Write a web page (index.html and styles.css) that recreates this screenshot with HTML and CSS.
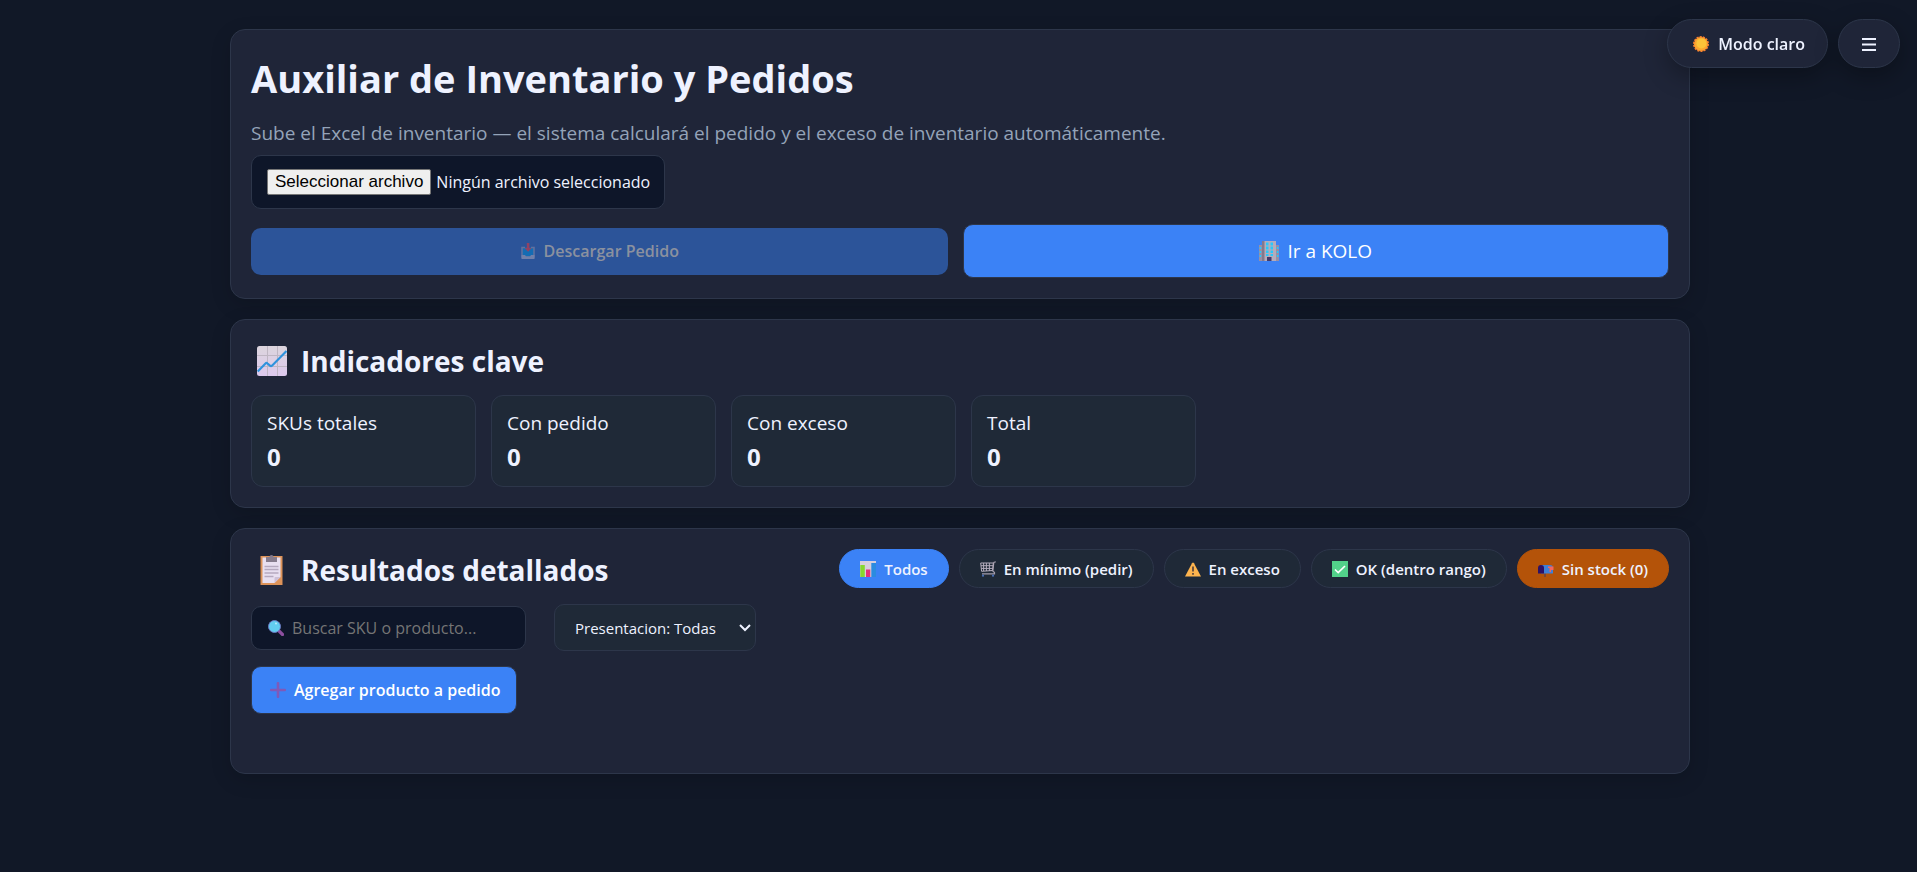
FILE: index.html
```
<!DOCTYPE html>
<html lang="es">
<head>
    <meta charset="UTF-8">
    <meta name="viewport" content="width=device-width, initial-scale=1.0">
    <title>Auxiliar de Inventario y Pedidos</title>
    <link rel="stylesheet" href="styles.css">
</head>
<body>
    <div class="top-actions">
        <button type="button" class="float-btn">
            <svg class="icon" viewBox="0 0 16 16"><circle cx="8" cy="8" r="7" fill="#f9902f"/><circle cx="8" cy="8" r="7" fill="none" stroke="#f9802f" stroke-width="2" stroke-dasharray="2.100 1.040"/><circle cx="8" cy="8" r="6.600" fill="#f9a72f"/><circle cx="8.400" cy="7.400" r="5" fill="#fbc338"/></svg>
            <span>Modo claro</span>
        </button>
        <button type="button" class="float-btn menu-btn" aria-label="Menú">
            <svg class="menu-icon" viewBox="0 0 14 14"><path d="M0 2h14M0 7.500h14M0 13h14" stroke="#eef2ff" stroke-width="2"/></svg>
        </button>
    </div>

    <main class="container">
        <section class="card">
            <h1>Auxiliar de Inventario y Pedidos</h1>
            <p class="muted">Sube el Excel de inventario — el sistema calculará el pedido y el exceso de inventario automáticamente.</p>
            <label class="file-box" for="fileInput">
                <input type="file" id="fileInput" accept=".xlsx,.xls">
                <span class="file-btn">Seleccionar archivo</span>
                <span>Ningún archivo seleccionado</span>
            </label>
            <div class="main-actions">
                <button type="button" class="btn" id="downloadBtn" disabled>
                    <svg class="icon" viewBox="0 0 16 16"><path d="M5 4.500H2V14h12V4.500h-3" fill="#0084ce" stroke="#998ea4" stroke-width="1.500"/><path d="M1.500 12h3.500l1 1.500h4l1-1.500h3.500V16h-13z" fill="#b4acbc"/><path d="M6.800 0h2.600v5h2.200L8.100 8.800 4.600 5h2.200z" fill="#f8312f"/></svg>
                    <span>Descargar Pedido</span>
                </button>
                <a class="btn link-btn" href="#kolo">
                    <svg class="icon-lg" viewBox="0 0 20 20"><path d="M0 4h5v16H0zM15 4h5v16h-5z" fill="#998ea4"/><path d="M3 0h14v20H3z" fill="#b4acbc"/><path d="M3 0h2.500v20H3z" fill="#83798d"/><path d="M7 1.500h2.500v3H7zM11.500 1.500H14v3h-2.500zM7 5.500h2.500v3H7zM11.500 5.500H14v3h-2.500zM7 9.500h2.500v2.500H7zM11.500 9.500H14V12h-2.500zM7 13h2.500v2H7zM11.500 13H14v2h-2.500zM.6 6h1.600v2H.6zM.6 10h1.600v2H.6zM.6 14h1.600v2H.6zM17.800 6h1.600v2h-1.600zM17.800 10h1.600v2h-1.600zM17.800 14h1.600v2h-1.600z" fill="#26c9fc"/><path d="M8 16h4.500v4H8z" fill="#433b6b"/></svg>
                    <span>Ir a KOLO</span>
                </a>
            </div>
        </section>

        <section class="card">
            <h2>
                <svg class="title-icon" viewBox="0 0 30 30"><defs><linearGradient id="paper" x2="0" y2="1"><stop offset="0" stop-color="#dcd5dd"/><stop offset="1" stop-color="#ddc9ee"/></linearGradient></defs><rect width="30" height="30" rx="2.500" fill="url(#paper)"/><path d="M10.500 0v30M20.500 0v30M0 9.500h30M0 20.500h30" stroke="#bfb6c3"/><path d="M.7 25.500L8.500 17.500q1-1 2 0l2.500 2.200q1 .8 2 0L29.500 5" fill="none" stroke="#2f93dd" stroke-width="2.200"/></svg>
                <span>Indicadores clave</span>
            </h2>
            <div class="kpis">
                <div class="kpi"><div>SKUs totales</div><strong>0</strong></div>
                <div class="kpi"><div>Con pedido</div><strong>0</strong></div>
                <div class="kpi"><div>Con exceso</div><strong>0</strong></div>
                <div class="kpi"><div>Total</div><strong>0</strong></div>
            </div>
        </section>

        <section class="card results">
            <div class="results-head">
                <h2>
                    <svg class="title-icon" viewBox="0 0 30 30"><path d="M3.500 1h22v29h-22z" fill="#dd9359"/><path d="M5.500 2.500h18V22L17.500 28h-12z" fill="#e8dff0"/><path d="M23.500 22h-5q-1 0-1 1v5z" fill="#cdbfd6"/><path d="M9 2h3.500a2 2 0 0 1 4 0H20v5H9z" fill="#857b8c"/><path d="M7.500 11.500h14M7.500 14.500h14M7.500 18h14M7.500 21.500h9" stroke="#b5a9bf" stroke-width="1.300"/></svg>
                    <span>Resultados detallados</span>
                </h2>
                <div class="filters">
                    <button type="button" class="chip active">
                        <svg class="icon" viewBox="0 0 16 16"><path d="M0 0h16v16H0z" fill="#d8cfdd"/><path d="M.3 4h4.500v12H.3z" fill="#86d72f"/><path d="M6 8.500h4.300V16H6z" fill="#e3307c"/><path d="M11.300 2H16v14h-4.700z" fill="#2b8be0"/></svg>
                        <span>Todos</span>
                    </button>
                    <button type="button" class="chip">
                        <svg class="icon" viewBox="0 0 16 16"><path d="M15.800.7l-2 .8-1 8.500 1.700 1.500v1.300H2" fill="none" stroke="#a49cac" stroke-width="1.200"/><path d="M.7 2h12.600l-.7 7.500-11 .8zM1 4.700h12M1.200 7.400h11.600M3.600 2v8M6.400 2v8M9.400 2v8" fill="none" stroke="#b4acbc"/><circle cx="3" cy="14.700" r="1.100" fill="#4a6fb8"/><circle cx="13" cy="14.700" r="1.100" fill="#4a6fb8"/></svg>
                        <span>En mínimo (pedir)</span>
                    </button>
                    <button type="button" class="chip">
                        <svg class="icon" viewBox="0 0 16 16"><path d="M8 1.500Q8.500 1.500 9 2.300L16 15.500H0L7 2.300Q7.500 1.500 8 1.500z" fill="#fdb44e"/><path d="M8 5.500v5M8 12v1.800" stroke="#4b3b3b" stroke-width="1.600"/></svg>
                        <span>En exceso</span>
                    </button>
                    <button type="button" class="chip">
                        <svg class="icon" viewBox="0 0 16 16"><path d="M0 0h16v16H0z" fill="#52d18a"/><path d="M3 8.500l3.200 3L13 5" fill="none" stroke="#fff" stroke-width="1.700"/></svg>
                        <span>OK (dentro rango)</span>
                    </button>
                    <button type="button" class="chip warn">
                        <svg class="icon" viewBox="0 0 16 16"><path d="M6 12h2v4H6z" fill="#7d4533"/><path d="M3 4h9q3 0 3 3v5.500H3z" fill="#3f7fd6"/><path d="M0 12.500V7a3 3 0 0 1 6 0v5.500z" fill="#2d1166"/><path d="M10 5.500h5.500v3.500H13v2h-1.500V7H10z" fill="#f3655c"/></svg>
                        <span>Sin stock (0)</span>
                    </button>
                </div>
            </div>
            <div class="search-row">
                <div class="search">
                    <svg class="icon" viewBox="0 0 16 16"><path d="M10.500 10.500l4 4" stroke="#8d4f9f" stroke-width="3.200" stroke-linecap="round"/><circle cx="6.500" cy="6.500" r="6" fill="#62cdf0" stroke="#6b7ac4"/><circle cx="8" cy="3.500" r="1" fill="#b9ecfb"/></svg>
                    <input type="text" placeholder="Buscar SKU o producto..." aria-label="Buscar SKU o producto">
                </div>
                <div class="select-wrap">
                    <select aria-label="Presentacion">
                        <option>Presentacion: Todas</option>
                    </select>
                    <svg class="chevron" viewBox="0 0 12 8"><path d="M1 1l5 5 5-5" fill="none" stroke="#eef2ff" stroke-width="2"/></svg>
                </div>
            </div>
            <button type="button" class="btn add-btn">
                <svg class="icon" viewBox="0 0 16 16"><path d="M8 1.200v13.600M1.200 8h13.600" stroke="#7f59b8" stroke-width="2.600" stroke-linecap="round"/></svg>
                <span>Agregar producto a pedido</span>
            </button>
        </section>
    </main>
</body>
</html>
```

FILE: styles.css
```
:root {
    --bg: #111827;
    --card: #1f2538;
    --panel: #1f2937;
    --input: #0e1629;
    --border: #2d364a;
    --primary: #3b82f6;
    --text: #eef2ff;
    --muted: #94a3b8;
}
* {
    box-sizing: border-box;
}
body {
    margin: 0;
    padding: 29px 20px 20px 23px;
    min-height: 100vh;
    background: var(--bg);
    color: var(--text);
    font-family: 'Segoe UI', 'Open Sans', sans-serif;
    font-size: 19px;
    line-height: 26px;
}
button,
input,
select {
    font-family: inherit;
    color: inherit;
}
svg {
    flex: none;
}
.icon {
    width: 16px;
    height: 16px;
}
.icon-lg {
    width: 20px;
    height: 20px;
}

/* floating buttons */
.top-actions {
    position: fixed;
    top: 19px;
    right: 17px;
    display: flex;
    gap: 10px;
    z-index: 10;
}
.float-btn {
    display: flex;
    align-items: center;
    justify-content: center;
    gap: 9px;
    height: 49px;
    padding: 0 22px 0 25px;
    border: 1px solid var(--border);
    border-radius: 25px;
    background: var(--card);
    font-size: 16px;
    font-weight: 600;
    box-shadow: 0 8px 24px rgba(0, 0, 0, 0.3);
}
.menu-btn {
    width: 62px;
    padding: 0;
}
.menu-icon {
    width: 14px;
    height: 14px;
}

.container {
    max-width: 1460px;
    margin: 0 auto;
}
.card {
    margin-bottom: 20px;
    padding: 20px;
    border: 1px solid var(--border);
    border-radius: 15px;
    background: var(--card);
    box-shadow: 0 6px 20px rgba(0, 0, 0, 0.15);
}
h1 {
    margin: 0 0 14px;
    font-size: 38px;
    line-height: 56px;
}
h2 {
    display: flex;
    align-items: center;
    gap: 14px;
    margin: 0;
    padding-left: 6px;
    font-size: 28px;
    line-height: 42px;
}
.title-icon {
    width: 30px;
    height: 30px;
}
.muted {
    margin: 0 0 9px;
    color: var(--muted);
}

.file-box {
    display: inline-flex;
    align-items: center;
    gap: 5px;
    height: 54px;
    padding: 0 14px 0 15px;
    border: 1px solid var(--border);
    border-radius: 10px;
    background: var(--input);
    font-size: 16px;
    cursor: pointer;
}
.file-box input {
    position: absolute;
    width: 1px;
    height: 1px;
    opacity: 0;
}
.file-btn {
    padding: 0 7px;
    border: 1px solid #767676;
    border-radius: 2px;
    background: #efefef;
    color: #000;
    font-family: 'Liberation Sans', Arial, sans-serif;
    font-size: 17px;
    line-height: 24px;
}
.main-actions {
    display: flex;
    align-items: center;
    gap: 15px;
    margin-top: 15px;
}
.btn {
    display: flex;
    align-items: center;
    justify-content: center;
    gap: 8px;
    height: 47px;
    padding: 0 18px;
    border: 0;
    border-radius: 10px;
    background: var(--primary);
    color: #fff;
    font-size: 16px;
    font-weight: 600;
    text-decoration: none;
}
.main-actions .btn {
    flex: 1;
}
.btn:disabled {
    background: #2c5499;
    color: #8b919f;
}
.btn:disabled .icon {
    opacity: 0.5;
}
.main-actions .link-btn {
    height: 54px;
    padding: 0 22px;
    border: 1px solid var(--border);
    font-size: 19px;
    font-weight: 400;
}

.kpis {
    display: grid;
    grid-template-columns: repeat(auto-fill, 225px);
    gap: 15px;
    margin-top: 13px;
}
.kpi {
    padding: 14px 15px 12px;
    border: 1px solid var(--border);
    border-radius: 12px;
    background: var(--panel);
}
.kpi strong {
    display: block;
    margin-top: 4px;
    font-size: 24px;
    line-height: 34px;
}

.results {
    padding-bottom: 59px;
}
.results-head {
    display: flex;
    align-items: flex-start;
    justify-content: space-between;
    flex-wrap: wrap;
    gap: 10px;
}
.filters {
    display: flex;
    flex-wrap: wrap;
    gap: 10px;
}
.chip {
    display: flex;
    align-items: center;
    gap: 8px;
    height: 39px;
    padding: 0 20px;
    border: 1px solid var(--border);
    border-radius: 20px;
    background: var(--panel);
    font-size: 15px;
    font-weight: 600;
}
.chip.active {
    border-color: var(--primary);
    background: var(--primary);
}
.chip.warn {
    border-color: #b45309;
    background: #b45309;
}
.search-row {
    display: flex;
    align-items: center;
    flex-wrap: wrap;
    gap: 28px;
    margin-top: 13px;
}
.search {
    display: flex;
    align-items: center;
    gap: 8px;
    width: 275px;
    height: 44px;
    padding: 0 16px;
    border: 1px solid var(--border);
    border-radius: 10px;
    background: var(--input);
}
.search input {
    flex: 1;
    min-width: 0;
    padding: 0;
    border: 0;
    outline: 0;
    background: none;
    font-size: 16px;
}
.search input::placeholder {
    color: #757575;
}
.select-wrap {
    position: relative;
}
.select-wrap select {
    appearance: none;
    width: 202px;
    height: 47px;
    padding: 0 30px 0 20px;
    border: 1px solid var(--border);
    border-radius: 10px;
    background: var(--panel);
    font-size: 15px;
}
.chevron {
    position: absolute;
    top: 20px;
    right: 5px;
    width: 12px;
    height: 8px;
    pointer-events: none;
}
.add-btn {
    height: 48px;
    margin-top: 15px;
    padding: 0 15px 0 18px;
    border: 1px solid var(--border);
}
```
